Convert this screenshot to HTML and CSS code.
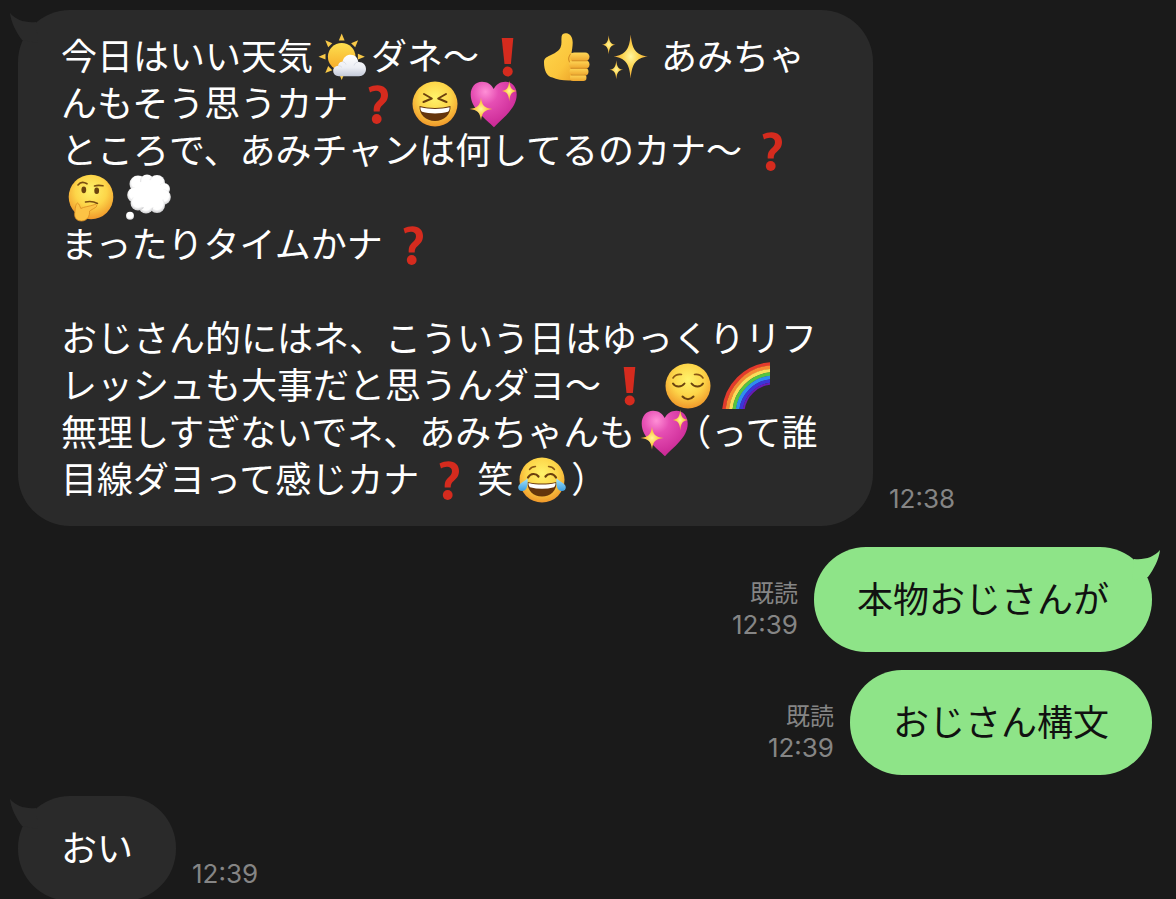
FILE: index.html
```html
<!DOCTYPE html>
<html lang="ja">
  <head>
    <meta charset="utf-8" />
    <meta name="viewport" content="width=device-width, initial-scale=1.0" />
    <title>トーク</title>
    <link rel="stylesheet" href="styles.css">
  </head>
  <body>
    <!-- emoji and bubble tail shapes -->
    <svg class="sprite" aria-hidden="true">
      <defs>
        <radialGradient id="g-face" cx="50%" cy="36%" r="64%">
          <stop offset="0" stop-color="#fff36b" />
          <stop offset=".55" stop-color="#fdd549" />
          <stop offset="1" stop-color="#f0982a" />
        </radialGradient>
        <linearGradient id="g-sun" x1="0" y1="0" x2="0" y2="1">
          <stop offset="0" stop-color="#fde04f" />
          <stop offset="1" stop-color="#f7a928" />
        </linearGradient>
        <linearGradient id="g-cloud" x1="0" y1="0" x2="0" y2="1">
          <stop offset="0" stop-color="#ffffff" />
          <stop offset=".6" stop-color="#eceef4" />
          <stop offset="1" stop-color="#c3c9d8" />
        </linearGradient>
        <radialGradient id="g-puff" cx="50%" cy="42%" r="56%">
          <stop offset=".65" stop-color="#ffffff" />
          <stop offset="1" stop-color="#cfcfd1" />
        </radialGradient>
        <linearGradient id="g-hand" x1="0" y1="0" x2="1" y2="1">
          <stop offset="0" stop-color="#ffd94e" />
          <stop offset=".6" stop-color="#fbc53c" />
          <stop offset="1" stop-color="#e89a24" />
        </linearGradient>
        <linearGradient id="g-finger" x1="0" y1="0" x2="0" y2="1">
          <stop offset="0" stop-color="#ffd857" />
          <stop offset="1" stop-color="#eda52d" />
        </linearGradient>
        <radialGradient id="g-star">
          <stop offset="0" stop-color="#fff6a0" />
          <stop offset=".5" stop-color="#fdd24a" />
          <stop offset="1" stop-color="#f1a83c" />
        </radialGradient>
        <radialGradient id="g-heart" cx="32%" cy="22%" r="80%">
          <stop offset="0" stop-color="#ff8fd6" />
          <stop offset=".35" stop-color="#e64fb4" />
          <stop offset="1" stop-color="#c92794" />
        </radialGradient>
        <linearGradient id="g-tear" x1="0" y1="0" x2="0" y2="1">
          <stop offset="0" stop-color="#a5e4fb" />
          <stop offset="1" stop-color="#3c9de0" />
        </linearGradient>
        <path id="spark" d="M0 -10C.8 -3 3 -.8 10 0C3 .8 .8 3 0 10C-.8 3 -3 .8 -10 0C-3 -.8 -.8 -3 0 -10Z" fill="url(#g-star)" />
      </defs>

      <symbol id="tail" viewBox="0 0 28 30">
        <path d="M0 0C6 7 15 10 26 9L28 30L12 27C6 19 1 9 0 0Z" fill="currentColor" />
      </symbol>

      <symbol id="sun" viewBox="0 0 48 48">
        <g fill="#f8c948">
          <path id="ray" d="M20.8 7.5L23.7 .5L26.6 7.5Z" />
          <use href="#ray" transform="rotate(45 23.7 23.7)" />
          <use href="#ray" transform="rotate(90 23.7 23.7)" />
          <use href="#ray" transform="rotate(180 23.7 23.7)" />
          <use href="#ray" transform="rotate(225 23.7 23.7)" />
          <use href="#ray" transform="rotate(270 23.7 23.7)" />
          <use href="#ray" transform="rotate(315 23.7 23.7)" />
        </g>
        <circle cx="23.7" cy="23.7" r="13.8" fill="url(#g-sun)" />
        <path d="M21 43.2C17.5 43.2 15.2 41 15.2 37.8C15.2 35 17.4 33 20.2 32.8C20.2 30.2 22 28.5 24.6 28.7C25.4 24.5 28.6 21.8 32.5 21.8C37 21.8 40 25 40.2 29C44.8 28.6 48 32 48 36C48 40.2 45 43.2 41 43.2Z" fill="url(#g-cloud)" />
        <path d="M20.2 32.8C22 32.7 23 33.4 24 34.5M24.6 28.7C26.5 29 27.5 30 28 31.5M40.2 29C38 29.3 36.5 30.5 36 32.5" fill="none" stroke="#d5d9e3" stroke-width=".9" />
      </symbol>

      <symbol id="bang" viewBox="0 0 48 48">
        <path d="M17.7 5H29.3L26.9 31H20.5Z" fill="#d52b1e" />
        <circle cx="23.7" cy="38.5" r="5" fill="#d52b1e" />
      </symbol>

      <symbol id="question" viewBox="0 0 48 48">
        <path d="M15.5 7.5C18.5 6 21.5 5.2 24.5 5.2C31 5.2 35 9 35 15C35 20 32.5 22.6 29.7 24.9C27.5 26.7 26.8 28 26.7 31.5H20.7C20.6 26.8 21.3 24.5 23.9 22C26.2 19.8 28 18.4 28 15.3C28 12.3 26 10.8 23 10.8C20.8 10.8 18.7 11.5 17 12.5Z" fill="#d52b1e" />
        <circle cx="23.7" cy="39" r="4.9" fill="#d52b1e" />
      </symbol>

      <symbol id="thumb" viewBox="0 0 48 48">
        <path d="M2 29C2 25.5 4.5 24 8 22.5C12 20.8 16.5 18.5 18.5 14.5C20.2 11 19 7 19.6 3.5C20 1 22 0 24.3 .3C28.5 .8 30.7 4.5 30.7 9.5C30.7 13.5 30 16.5 29.5 20H40V45L30 47.5C22 48 15 46.5 10.5 44.5C5 43.5 2 38 2 29Z" fill="url(#g-hand)" />
        <rect x="28" y="19.4" width="19.5" height="8.8" rx="4.4" fill="url(#g-finger)" />
        <rect x="27" y="27.4" width="20.5" height="8.2" rx="4.1" fill="url(#g-finger)" />
        <rect x="27.5" y="35" width="19" height="7.4" rx="3.7" fill="url(#g-finger)" />
        <rect x="28" y="41.6" width="16.5" height="6.4" rx="3.2" fill="url(#g-finger)" />
        <path d="M30 27.8H45M29 35.3H45M29.5 42H44M28.5 21C26.5 24 26 26 27.5 29" fill="none" stroke="#c97f1c" stroke-width=".9" stroke-linecap="round" />
      </symbol>

      <symbol id="sparkles" viewBox="0 0 48 48">
        <use href="#spark" transform="translate(30.7 23.5) scale(1.72 2.2)" />
        <use href="#spark" transform="translate(8.7 11.7) scale(.68 .95)" />
        <use href="#spark" transform="translate(16.3 36.7) scale(.68 .95)" />
      </symbol>

      <symbol id="laugh" viewBox="0 0 48 48">
        <circle cx="24" cy="24" r="22.5" fill="url(#g-face)" />
        <path d="M13 14L20.8 18.5L12.5 22M35 14L27.2 18.5L35.5 22" fill="none" stroke="#6b3f0d" stroke-width="2" stroke-linecap="round" stroke-linejoin="round" />
        <path d="M8.5 26C18 28.5 30 28.5 39.5 26C40 34.5 33 41 24 41C15 41 8 34.5 8.5 26Z" fill="#64340c" />
        <path d="M9.5 27.2C19 29.5 29 29.5 38.5 27.2C38.8 29.5 38 31 37 31.8C29 34 19 34 11 31.8C10 31 9.2 29.5 9.5 27.2Z" fill="#fff" />
      </symbol>

      <symbol id="heart" viewBox="0 0 48 48">
        <path d="M25 47.3C17 39 1.7 29 1.7 14.5C1.7 7 6.5 1.7 13 1.7C18.5 1.7 22.5 4.5 24.7 9C27 4.5 31 1.7 36.4 1.7C43 1.7 47.7 7 47.7 14.5C47.7 29 33 38 25 47.3Z" fill="url(#g-heart)" />
        <use href="#spark" transform="translate(12 29) scale(1.15)" />
        <use href="#spark" transform="translate(40.3 11) scale(.75 1.05)" />
      </symbol>

      <symbol id="thinking" viewBox="0 0 48 48">
        <circle cx="25" cy="23" r="22.3" fill="url(#g-face)" />
        <ellipse cx="17.8" cy="15.8" rx="2.4" ry="3.4" fill="#6b430f" />
        <ellipse cx="30.7" cy="16.8" rx="2.4" ry="3.3" fill="#6b430f" />
        <path d="M12 11C14 8.3 17.5 7.6 21 9.8M28.5 12C31.5 11 34 11.3 37 11.8" fill="none" stroke="#7a4d12" stroke-width="1.6" stroke-linecap="round" />
        <path d="M19.5 28C24 26.8 28 27.5 31.5 29.5" fill="none" stroke="#7a4d12" stroke-width="1.5" stroke-linecap="round" />
        <path d="M11.5 29C13.5 30 13.8 32.5 14.8 34.5C18 32.8 23 32.5 28.8 30.5C31 30 31.3 32.5 29.5 33.5C27 35 25 36 23.5 37.2C24 41.5 21.5 47 15.5 47C10 47 8 43 8.8 38.5C9.3 35.5 9.3 30 11.5 29Z" fill="#fcc345" stroke="#d98b22" stroke-width=".8" />
      </symbol>

      <symbol id="thought" viewBox="0 0 48 48">
        <g fill="url(#g-puff)">
          <circle cx="14" cy="10" r="8.5" />
          <circle cx="23" cy="7.5" r="7" />
          <circle cx="33" cy="9" r="8" />
          <circle cx="40" cy="15" r="6" />
          <circle cx="39" cy="23" r="7.8" />
          <circle cx="33" cy="31" r="8" />
          <circle cx="22" cy="32" r="7.5" />
          <circle cx="11" cy="21" r="7.8" />
          <circle cx="14" cy="29" r="7.5" />
          <circle cx="6" cy="41.8" r="4" />
        </g>
        <ellipse cx="24.5" cy="20" rx="15.5" ry="14" fill="#fff" />
      </symbol>

      <symbol id="relieved" viewBox="0 0 48 48">
        <circle cx="24" cy="24" r="22.5" fill="url(#g-face)" />
        <path d="M9 21.5C11.5 25.5 17.5 25.5 20.5 21.5M27.5 21.5C30.5 25.5 36.5 25.5 39 21.5M18.500 34.500C21.500 38 26.500 38 29.500 34.500" fill="none" stroke="#6b430f" stroke-width="2" stroke-linecap="round" />
        <path d="M9 16C11 13 14 12 17.5 12.5M39 16C37 13 34 12 30.5 12.5" fill="none" stroke="#8a5614" stroke-width="1.6" stroke-linecap="round" />
      </symbol>

      <symbol id="rainbow" viewBox="0 0 48 48">
        <clipPath id="rainbow-clip"><rect width="48" height="47" /></clipPath>
        <g clip-path="url(#rainbow-clip)" fill="none" stroke-width="3.6">
          <circle cx="52" cy="52" r="50.2" stroke="#e23a2c" />
          <circle cx="52" cy="52" r="46.8" stroke="#f58a33" />
          <circle cx="52" cy="52" r="43.4" stroke="#fbdc5a" />
          <circle cx="52" cy="52" r="40" stroke="#55c440" />
          <circle cx="52" cy="52" r="36.6" stroke="#2f8df0" />
          <circle cx="52" cy="52" r="33.2" stroke="#3b35d8" />
          <circle cx="52" cy="52" r="30.6" stroke="#6a1bb5" stroke-width="2" />
        </g>
      </symbol>

      <symbol id="joy" viewBox="0 0 48 48">
        <circle cx="24" cy="24" r="22.5" fill="url(#g-face)" />
        <path d="M10 21.5C12.5 17 18 17 20.5 20.5M27.5 20.5C30 17 35.5 17 38 21.5" fill="none" stroke="#6b3f0d" stroke-width="2.2" stroke-linecap="round" />
        <path d="M11.5 13.5C13 11.5 15 10.5 17.5 10.5M36.5 13.5C35 11.5 33 10.5 30.5 10.5" fill="none" stroke="#8a5614" stroke-width="1.4" stroke-linecap="round" />
        <path d="M9.5 26C18 28 30 28 38.5 26C39 34.5 32.5 40.5 24 40.5C15.5 40.5 9 34.5 9.5 26Z" fill="#64340c" />
        <path d="M10.5 27C19 29 29 29 37.5 27C37.6 29 37 30.5 36 31.3C28 33.3 20 33.3 12 31.3C11 30.5 10.4 29 10.5 27Z" fill="#fff" />
        <path d="M9.5 22.5C10 28 9.5 34.5 4.5 35C.5 35.3 -.8 31.5 1 29C3 26 7 25.5 9.5 22.5ZM38.5 22.5C38 28 38.5 34.5 43.5 35C47.5 35.3 48.8 31.5 47 29C45 26 41 25.5 38.5 22.5Z" fill="url(#g-tear)" />
      </symbol>
    </svg>

    <main class="talk">
      <div class="message received">
        <div class="bubble">
          <svg class="tail" aria-hidden="true"><use href="#tail" /></svg>
          <p>今日はいい天気<svg class="emoji" role="img" aria-label="🌤"><use href="#sun" /></svg>ダネ〜<svg class="emoji" role="img" aria-label="❗"><use href="#bang" /></svg><svg class="emoji" role="img" aria-label="👍"><use href="#thumb" /></svg><svg class="emoji" role="img" aria-label="✨"><use href="#sparkles" /></svg> あみちゃんもそう思うカナ<svg class="emoji" role="img" aria-label="❓"><use href="#question" /></svg><svg class="emoji" role="img" aria-label="😆"><use href="#laugh" /></svg><svg class="emoji" role="img" aria-label="💖"><use href="#heart" /></svg><br>
          ところで、あみチャンは何してるのカナ〜<svg class="emoji" role="img" aria-label="❓"><use href="#question" /></svg><svg class="emoji" role="img" aria-label="🤔"><use href="#thinking" /></svg><svg class="emoji" role="img" aria-label="💭"><use href="#thought" /></svg><br>
          まったりタイムかナ<svg class="emoji" role="img" aria-label="❓"><use href="#question" /></svg></p>
          <p>おじさん的にはネ、こういう日はゆっくりリフレッシュも大事だと思うんダヨ〜<svg class="emoji" role="img" aria-label="❗"><use href="#bang" /></svg><svg class="emoji" role="img" aria-label="😌"><use href="#relieved" /></svg><svg class="emoji" role="img" aria-label="🌈"><use href="#rainbow" /></svg><br>
          無理しすぎないでネ、あみちゃんも<svg class="emoji" role="img" aria-label="💖"><use href="#heart" /></svg><span class="half">（</span>って誰目線ダヨって感じカナ<svg class="emoji" role="img" aria-label="❓"><use href="#question" /></svg>笑<svg class="emoji" role="img" aria-label="😂"><use href="#joy" /></svg>）</p>
        </div>
        <div class="meta"><time>12:38</time></div>
      </div>

      <div class="message sent">
        <div class="bubble">
          <svg class="tail" aria-hidden="true"><use href="#tail" /></svg>
          <p>本物おじさんが</p>
        </div>
        <div class="meta"><span class="read">既読</span><time>12:39</time></div>
      </div>

      <div class="message sent next">
        <div class="bubble">
          <p>おじさん構文</p>
        </div>
        <div class="meta"><span class="read">既読</span><time>12:39</time></div>
      </div>

      <div class="message received">
        <div class="bubble">
          <svg class="tail" aria-hidden="true"><use href="#tail" /></svg>
          <p>おい</p>
        </div>
        <div class="meta"><time>12:39</time></div>
      </div>
    </main>
  </body>
</html>
```
FILE: styles.css
```css
body {
  margin: 0;
  background-color: #1a1a1a;
  font-family: "Noto Sans CJK JP", sans-serif;
}

.sprite {
  position: absolute;
  width: 0;
  height: 0;
}

.talk {
  padding: 10px 24px 0 18px;
}

.message {
  display: flex;
  align-items: flex-end;
  gap: 16px;
  margin-top: 21px;
}

.message:first-child {
  margin-top: 0;
}

.message.next {
  margin-top: 18px;
}

.message.sent {
  flex-direction: row-reverse;
}

.bubble {
  position: relative;
  box-sizing: border-box;
  display: flex;
  flex-direction: column;
  justify-content: center;
  max-width: 855px;
  min-height: 105px;
  padding: 21px 43px 25px;
  border-radius: 52px;
  font-size: 36px;
  line-height: 47px;
}

.received .bubble {
  background-color: #2a2a2a;
  color: #fff;
}

.sent .bubble {
  background-color: #8ee488;
  color: #111;
}

.bubble p {
  margin: 0;
}

.bubble p + p {
  margin-top: 47px;
}

/* the tail hangs over the bubble's outer top corner */
.tail {
  position: absolute;
  top: 3px;
  width: 28px;
  height: 30px;
}

.received .tail {
  left: -8px;
  color: #2a2a2a;
}

.sent .tail {
  right: -8px;
  color: #8ee488;
  transform: scaleX(-1);
}

.emoji {
  width: 48px;
  height: 48px;
  margin: -12px 5px -5px;
  vertical-align: middle;
}

.half {
  font-feature-settings: "halt";
}

.meta {
  display: flex;
  flex-direction: column;
  flex-shrink: 0;
  padding-bottom: 12px;
  color: #858585;
  font-family: Inter, "Noto Sans CJK JP", sans-serif;
  font-size: 26px;
  line-height: 31px;
}

.sent .meta {
  text-align: right;
}

.read {
  font-size: 24px;
}
```
